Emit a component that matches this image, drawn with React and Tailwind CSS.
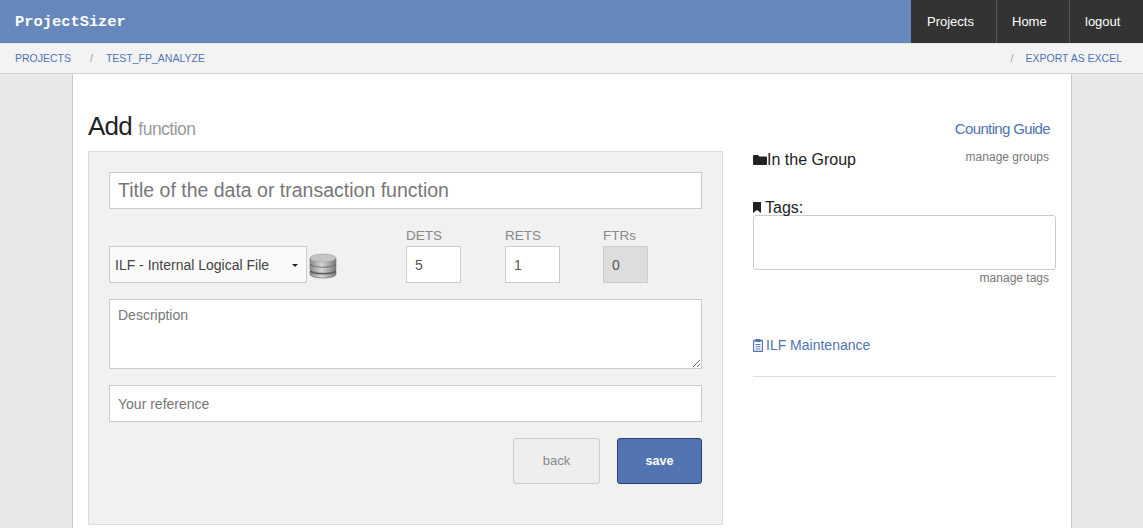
const sans = 'font-["Liberation_Sans",Arial,sans-serif]';

function DbIcon() {
  return (
    <svg width="28" height="26" viewBox="0 0 28 26" className="shrink-0">
      <defs>
        <linearGradient id="db" x1="0" x2="1" y1="0" y2="0">
          <stop offset="0" stopColor="#8a8a8a" />
          <stop offset="0.45" stopColor="#d6d6d6" />
          <stop offset="1" stopColor="#777" />
        </linearGradient>
      </defs>
      <path d="M1 18v3c0 2.5 5.5 4 13 4s13-1.500 13-4v-3z" fill="url(#db)" stroke="#666" strokeWidth="0.6" />
      <ellipse cx="14" cy="18" rx="13" ry="3.600" fill="#555" />
      <path d="M1 11v5c0 2.500 5.500 4 13 4s13-1.500 13-4v-5z" fill="url(#db)" stroke="#777" strokeWidth="0.6" />
      <ellipse cx="14" cy="11" rx="13" ry="3.600" fill="#555" />
      <path d="M1 5v5c0 2.500 5.500 4 13 4s13-1.500 13-4V5z" fill="url(#db)" stroke="#777" strokeWidth="0.6" />
      <ellipse cx="14" cy="5" rx="13" ry="4" fill="#c4c4c4" stroke="#999" strokeWidth="0.5" />
    </svg>
  );
}

function FolderIcon() {
  return (
    <svg width="14" height="10" viewBox="0 0 14 10" className="shrink-0" fill="#222">
      <path d="M1 0h4l1.500 1.500H13a1 1 0 0 1 1 1V9a1 1 0 0 1-1 1H1a1 1 0 0 1-1-1V1a1 1 0 0 1 1-1z" />
    </svg>
  );
}

function BookmarkIcon() {
  return (
    <svg width="8" height="11" viewBox="0 0 8 11" className="shrink-0" fill="#222">
      <path d="M0 0h8v11L4 8 0 11z" />
    </svg>
  );
}

function ClipboardIcon() {
  return (
    <svg width="10" height="13" viewBox="0 0 10 13" className="shrink-0">
      <rect x="0.500" y="1.500" width="9" height="11" rx="1" fill="none" stroke="#4f74b3" strokeWidth="1.300" />
      <rect x="2.500" y="0" width="5" height="3" rx="0.500" fill="#4f74b3" />
      <path d="M2.500 5.500h5M2.500 7.800h5M2.500 10h5" stroke="#4f74b3" strokeWidth="1.100" />
    </svg>
  );
}

function NumBox({ label, value, disabled, width }) {
  return (
    <div className={`flex flex-col ${width}`}>
      <span className="text-[13.5px] leading-[20px] text-[#888]">{label}</span>
      <input
        readOnly
        value={value}
        className={`h-[37px] w-full border px-[8px] text-[14px] text-[#555] outline-none ${
          disabled ? 'bg-[#dddddd] border-[#cccccc]' : 'bg-white border-[#cccccc]'
        }`}
      />
    </div>
  );
}

export default function App() {
  return (
    <div className={`h-screen overflow-hidden bg-[#e8e8e8] ${sans}`}>
      <nav className="h-[43px] bg-[#6687bc] flex items-stretch justify-between">
        <span className='pl-[15px] pt-[2px] self-center font-["Liberation_Mono",monospace] font-bold text-[15.4px] text-white'>
          ProjectSizer
        </span>
        <div className="flex bg-[#333333] text-white text-[13px]">
          <a className="w-[86px] pl-[16px] flex items-center border-r border-[#555]">Projects</a>
          <a className="w-[73px] pl-[15px] flex items-center border-r border-[#555]">Home</a>
          <a className="w-[73px] pl-[15px] flex items-center">logout</a>
        </div>
      </nav>

      <div className="h-[30px] mt-px bg-[#f3f3f3] border-b border-[#d4d4d4] flex items-center pl-[15px] pr-[21px] text-[10.5px] text-[#4f74b3]">
        <a>PROJECTS</a>
        <span className="ml-[19px] mr-[13px] text-[#999]">/</span>
        <a>TEST_FP_ANALYZE</a>
        <span className="ml-auto mr-[12px] text-[#999]">/</span>
        <a>EXPORT AS EXCEL</a>
      </div>

      <main className="ml-[72px] w-[1000px] h-[500px] bg-white border-x border-[#cccccc] pl-[15px] pr-[15px] flex">
        <div className="w-[635px] shrink-0">
          <h1 className="mt-[34px] h-[43px] leading-[36px] text-[26px] tracking-[-0.8px] text-[#222]">
            Add <small className="text-[17.5px] tracking-[-0.5px] text-[#999]">function</small>
          </h1>
          <form className="bg-[#f1f1f1] border border-[#dddddd] h-[374px] px-[20px] pt-[20px]">
            <input
              placeholder="Title of the data or transaction function"
              className="block w-[593px] h-[37px] border border-[#cccccc] bg-white px-[8px] text-[19.500px] text-[#555] placeholder:text-[#777] outline-none"
            />
            <div className="mt-[17px] flex items-end h-[57px]">
              <div className="w-[198px] h-[37px] border border-[#cccccc] bg-[#fafafa] flex items-center justify-between pl-[5px] pr-[8px] pt-px text-[14px] text-[#444]">
                ILF - Internal Logical File
                <span className="border-x-[3px] border-t-[3px] border-x-transparent border-t-[#222]" />
              </div>
              <div className="ml-[2px] mb-[4px]">
                <DbIcon />
              </div>
              <div className="ml-[69px] flex">
                <NumBox label="DETS" value="5" width="w-[55px]" />
                <NumBox label="RETS" value="1" width="w-[55px] ml-[44px]" />
                <NumBox label="FTRs" value="0" width="w-[45px] ml-[43px]" disabled />
              </div>
            </div>
            <textarea
              placeholder="Description"
              className="block mt-[16px] w-[593px] h-[70px] border border-[#cccccc] bg-white px-[8px] py-[5px] text-[14px] text-[#555] placeholder:text-[#777] outline-none"
            />
            <input
              placeholder="Your reference"
              className="block mt-[16px] w-[593px] h-[37px] border border-[#cccccc] bg-white px-[8px] text-[14px] text-[#555] placeholder:text-[#777] outline-none"
            />
            <div className="mt-[16px] w-[593px] flex justify-end gap-[17px]">
              <button type="button" className="w-[87px] h-[46px] rounded-[3px] border border-[#cccccc] bg-[#eeeeee] text-[13px] text-[#888]">
                back
              </button>
              <button type="button" className="w-[85px] h-[46px] rounded-[3px] border border-[#2b3f75] bg-[#5275b2] text-[12.500px] font-bold text-white">
                save
              </button>
            </div>
          </form>
        </div>

        <aside className="ml-[30px] w-[303px] shrink-0">
          <div className="mt-[45px] text-right pr-[6px] text-[15px] tracking-[-0.65px] leading-[20px] text-[#4f74b3]">Counting Guide</div>
          <div className="mt-[9px] flex justify-between items-start">
            <span className="flex items-center text-[16px] leading-[24px] text-[#222]">
              <FolderIcon />
              In the Group
            </span>
            <span className="pr-[7px] text-[12px] leading-[18px] text-[#777]">manage groups</span>
          </div>
          <div className="mt-[28px] flex items-center gap-[4px] text-[16px] leading-[15px] text-[#222]">
            <BookmarkIcon />
            Tags:
          </div>
          <div className="h-[55px] rounded-[3px] border border-[#cccccc] bg-white" />
          <div className="pr-[7px] text-right text-[12px] leading-[16px] text-[#777]">manage tags</div>
          <div className="mt-[49px] flex items-center gap-[3px] text-[14px] leading-[20px] text-[#4f74b3]">
            <ClipboardIcon />
            ILF Maintenance
          </div>
          <div className="mt-[21px] border-t border-[#dddddd]" />
        </aside>
      </main>
    </div>
  );
}
